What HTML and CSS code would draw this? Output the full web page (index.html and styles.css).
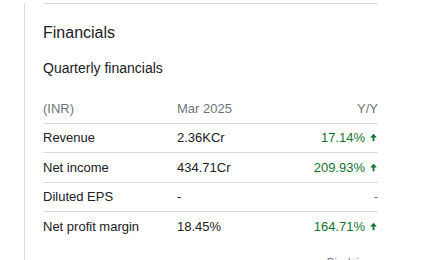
FILE: index.html
```html
<!DOCTYPE html>
<html>
<head>
<meta charset="utf-8">
<link rel="stylesheet" href="styles.css">
</head>
<body>
<div class="panel">
  <div class="content">
    <div class="topline"></div>
    <h2 class="title">Financials</h2>
    <div class="subtitle">Quarterly financials</div>
    <div class="table">
      <div class="row head">
        <div class="c1">(INR)</div>
        <div class="c2">Mar 2025</div>
        <div class="c3">Y/Y</div>
      </div>
      <div class="row">
        <div class="c1">Revenue</div>
        <div class="c2">2.36KCr</div>
        <div class="c3 up">17.14%<svg class="arrow" viewBox="0 0 24 24"><path d="M12 2l9 10h-6.5v10h-5v-10H3z"/></svg></div>
      </div>
      <div class="row">
        <div class="c1">Net income</div>
        <div class="c2">434.71Cr</div>
        <div class="c3 up">209.93%<svg class="arrow" viewBox="0 0 24 24"><path d="M12 2l9 10h-6.5v10h-5v-10H3z"/></svg></div>
      </div>
      <div class="row">
        <div class="c1">Diluted EPS</div>
        <div class="c2">-</div>
        <div class="c3 muted">-</div>
      </div>
      <div class="row last">
        <div class="c1">Net profit margin</div>
        <div class="c2">18.45%</div>
        <div class="c3 up">164.71%<svg class="arrow" viewBox="0 0 24 24"><path d="M12 2l9 10h-6.5v10h-5v-10H3z"/></svg></div>
      </div>
    </div>
    <div class="disclaimer">Disclaimer</div>
  </div>
</div>
</body>
</html>
```
FILE: styles.css
```css
html, body {
  margin: 0;
  padding: 0;
  background: #fff;
  height: 260px;
  overflow: hidden;
}
body {
  font-family: "Liberation Sans", Arial, sans-serif;
  color: #202124;
}
.panel {
  margin-left: 24px;
  border-left: 1px solid #dadce0;
  height: 260px;
  padding-left: 18px;
}
.content {
  width: 335px;
}
.topline {
  margin-top: 3px;
  border-top: 1px solid #dadce0;
}
.title {
  margin: 19px 0 0;
  font-weight: 400;
  font-size: 16px;
  line-height: 20px;
}
.subtitle {
  margin-top: 15px;
  font-size: 14px;
  line-height: 20px;
}
.table {
  margin-top: 16px;
  font-size: 13px;
  width: 335px;
}
.row {
  display: flex;
  align-items: center;
  height: 28.5px;
  border-bottom: 1px solid #dadce0;
}
.row.last {
  border-bottom: none;
}
.c1 {
  width: 134px;
  flex: none;
}
.c2 {
  flex: 1;
}
.head {
  color: #70757a;
}
.c3 {
  display: flex;
  align-items: center;
  justify-content: flex-end;
}
.up {
  color: #137333;
}
.muted {
  color: #70757a;
}
.arrow {
  width: 9px;
  height: 9px;
  margin-left: 4px;
  fill: #137333;
}
.disclaimer {
  margin-top: 15px;
  text-align: right;
  font-size: 11px;
  line-height: 13px;
  color: #70757a;
}
```
